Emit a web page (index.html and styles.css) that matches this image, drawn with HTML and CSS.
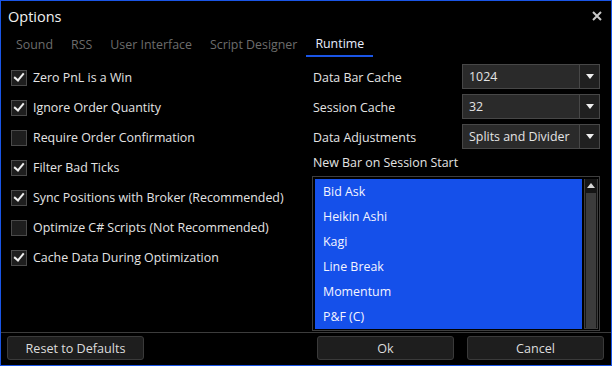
FILE: index.html
```html
<!DOCTYPE html>
<html>
  <head>
    <title>Options</title>
    <link rel="stylesheet" href="styles.css">
  </head>
  <body>
    <div class="window">
      <!-- Title bar -->
      <div class="titlebar">
        <span class="title">Options</span>
        <svg class="close" width="10" height="10" viewBox="0 0 10 10">
          <path d="M1 1 L9 9 M9 1 L1 9" stroke="#c8c8c8" stroke-width="2" />
        </svg>
      </div>

      <!-- Tabs -->
      <div class="tabs">
        <span class="tab">Sound</span>
        <span class="tab">RSS</span>
        <span class="tab">User Interface</span>
        <span class="tab">Script Designer</span>
        <span class="tab active">Runtime</span>
      </div>

      <div class="content">
        <!-- Left column: check options -->
        <div class="checks">
          <label class="check"><span class="box on"></span>Zero PnL is a Win</label>
          <label class="check"><span class="box on"></span>Ignore Order Quantity</label>
          <label class="check"><span class="box"></span>Require Order Confirmation</label>
          <label class="check"><span class="box on"></span>Filter Bad Ticks</label>
          <label class="check"><span class="box on"></span>Sync Positions with Broker (Recommended)</label>
          <label class="check"><span class="box"></span>Optimize C# Scripts (Not Recommended)</label>
          <label class="check"><span class="box on"></span>Cache Data During Optimization</label>
        </div>

        <!-- Right column: data settings -->
        <div class="settings">
          <div class="field">
            <span class="label">Data Bar Cache</span>
            <div class="combo"><span class="value">1024</span><span class="drop"></span></div>
          </div>
          <div class="field">
            <span class="label">Session Cache</span>
            <div class="combo"><span class="value">32</span><span class="drop"></span></div>
          </div>
          <div class="field">
            <span class="label">Data Adjustments</span>
            <div class="combo"><span class="value">Splits and Divider</span><span class="drop"></span></div>
          </div>
          <div class="list-label">New Bar on Session Start</div>
          <div class="listbox">
            <ul class="items">
              <li>Bid Ask</li>
              <li>Heikin Ashi</li>
              <li>Kagi</li>
              <li>Line Break</li>
              <li>Momentum</li>
              <li>P&amp;F (C)</li>
            </ul>
            <div class="scrollbar">
              <span class="up"></span>
              <span class="thumb"></span>
            </div>
          </div>
        </div>
      </div>

      <!-- Footer buttons -->
      <div class="footer">
        <button class="btn">Reset to Defaults</button>
        <div class="right-buttons">
          <button class="btn">Ok</button>
          <button class="btn">Cancel</button>
        </div>
      </div>
    </div>
  </body>
</html>
```

FILE: styles.css
```css
* {
  box-sizing: border-box;
}
body {
  margin: 0;
  background: #000;
  font-family: "Open Sans", "Noto Sans", Arial, sans-serif;
  font-size: 12.4px;
  color: #e4e4e4;
}
.window {
  width: 612px;
  height: 366px;
  border: 1px solid #1a55e6;
  background: #000;
  display: flex;
  flex-direction: column;
}
.titlebar {
  height: 33px;
  display: flex;
  justify-content: space-between;
  align-items: center;
  padding: 0 9px 0 7px;
}
.title {
  font-size: 14.5px;
  color: #f0f0f0;
}
.close {
  margin-top: -2px;
}
.tabs {
  display: flex;
  height: 24px;
  padding-left: 6px;
  align-items: stretch;
}
.tab {
  padding: 0 9px;
  color: #6c6c6c;
  line-height: 24px;
  font-size: 12.4px;
}
.tab.active {
  color: #e8eeff;
  border-bottom: 2px solid #1a55e6;
  line-height: 22px;
}
.content {
  flex: 1;
  display: flex;
  padding-top: 6px;
  border-bottom: 1px solid #3c3c3c;
}
.checks {
  width: 311px;
  padding-left: 10px;
  display: flex;
  flex-direction: column;
}
.check {
  height: 30px;
  display: flex;
  align-items: center;
}
.box {
  width: 16px;
  height: 16px;
  border: 1px solid #4a4a4a;
  background: #1e1e1e;
  margin-right: 6px;
  display: flex;
  align-items: center;
  justify-content: center;
}
.box.on::after {
  content: "";
  width: 8px;
  height: 4px;
  border-left: 2px solid #f0f0f0;
  border-bottom: 2px solid #f0f0f0;
  transform: rotate(-50deg);
  margin-top: -3px;
}
.settings {
  width: 288px;
  display: flex;
  flex-direction: column;
}
.field {
  height: 30px;
  display: flex;
  align-items: center;
  justify-content: space-between;
  padding-left: 1px;
}
.combo {
  width: 138px;
  height: 25px;
  border: 1px solid #474747;
  background: #2a2a2a;
  display: flex;
  margin-top: -2px;
}
.value {
  flex: 1;
  padding-left: 6px;
  line-height: 23px;
  white-space: nowrap;
  overflow: hidden;
}
.drop {
  width: 20px;
  border-left: 1px solid #474747;
  background: #202020;
  display: flex;
  align-items: center;
  justify-content: center;
}
.drop::after {
  content: "";
  border-left: 4px solid transparent;
  border-right: 4px solid transparent;
  border-top: 5px solid #f0f0f0;
}
.list-label {
  height: 23px;
  line-height: 20px;
  padding-left: 1px;
}
.listbox {
  flex: 1;
  border: 1px solid #3e3e3e;
  padding: 2px 1px 1px 2px;
  display: flex;
  margin-bottom: 1px;
  overflow: hidden;
}
.items {
  flex: 1;
  margin: 0;
  padding: 0;
  list-style: none;
  background: #1550ea;
  color: #f4f4ff;
}
.items li {
  height: 25px;
  line-height: 25px;
  padding-left: 8px;
}
.scrollbar {
  width: 14px;
  margin-left: 2px;
  border: 1px solid #3e3e3e;
  border-top: none;
  display: flex;
  flex-direction: column;
  align-items: center;
  background: #151515;
}
.up {
  height: 14px;
  display: flex;
  align-items: center;
}
.up::after {
  content: "";
  border-left: 4px solid transparent;
  border-right: 4px solid transparent;
  border-bottom: 5px solid #d8d8d8;
}
.thumb {
  flex: 1;
  width: 10px;
  background: #3c3c3c;
}
.footer {
  height: 33px;
  display: flex;
  justify-content: space-between;
  align-items: center;
  padding: 0 7px 1px 6px;
}
.right-buttons {
  display: flex;
  gap: 13px;
}
.btn {
  width: 137px;
  height: 24px;
  border: 1px solid #3a3a3a;
  border-radius: 3px;
  background: #1e1e1e;
  color: #dcdcdc;
  font-family: "Open Sans", "Noto Sans", Arial, sans-serif;
  font-size: 12.6px;
  padding: 0;
}
```
